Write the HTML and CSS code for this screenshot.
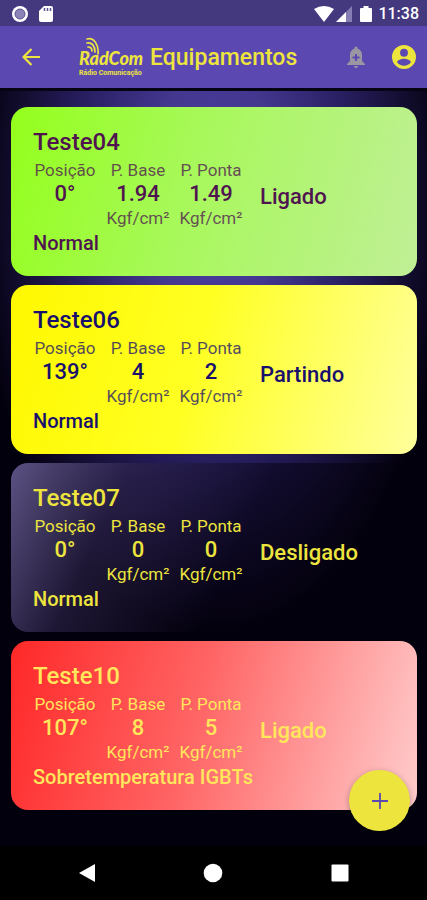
FILE: index.html
```html
<!DOCTYPE html>
<html lang="pt-BR">
<head>
    <meta charset="UTF-8">
    <meta name="viewport" content="width=device-width, initial-scale=1.0">
    <title>Equipamentos</title>
    <link rel="stylesheet" href="styles.css">
</head>
<body>
    <!-- Barra de status -->
    <div class="status-bar">
        <div class="status-left">
            <svg width="18" height="18" viewBox="0 0 18 18">
                <circle cx="9" cy="9" r="8" fill="#fff"/>
                <circle cx="9" cy="9" r="5" fill="#8c84b8" stroke="#5a5090"/>
            </svg>
            <svg width="14" height="18" viewBox="0 0 14 18">
                <path d="M5 1h7a2 2 0 0 1 2 2v12a2 2 0 0 1-2 2H2a2 2 0 0 1-2-2V6z" fill="#fff"/>
                <path d="M5.500 3v3M8.500 3v3M11.500 3v3" stroke="#5a5090" stroke-width="1.500"/>
            </svg>
        </div>
        <div class="status-right">
            <svg width="20" height="18" viewBox="0 0 20 18">
                <path d="M0 4Q10-2 20 4L10 17z" fill="#fff"/>
            </svg>
            <svg class="signal" width="16" height="18" viewBox="0 0 16 18">
                <path d="M0 17L16 1v16z" fill="#857db4"/>
                <path d="M0 17L10 7v10z" fill="#fff"/>
            </svg>
            <svg class="battery" width="12" height="18" viewBox="0 0 12 18">
                <path d="M3.500 1h5v2H11a1 1 0 0 1 1 1v12a1 1 0 0 1-1 1H1a1 1 0 0 1-1-1V4a1 1 0 0 1 1-1h2.500z" fill="#fff"/>
            </svg>
            <span>11:38</span>
        </div>
    </div>

    <!-- Cabeçalho -->
    <header class="app-bar">
        <button class="icon-btn" aria-label="Voltar">
            <svg width="18" height="18" viewBox="0 0 18 18">
                <path d="M18 9H2M9.500 1L1.500 9l8 8" fill="none" stroke="currentColor" stroke-width="2.200"/>
            </svg>
        </button>
        <div class="logo">
            <svg class="logo-waves" width="16" height="20" viewBox="0 0 16 20">
                <path d="M1 2C8 0 13 8 12 17M1 6c5-1 8 3 8 9M2 10c3 0 4 2 4 4" fill="none" stroke="currentColor" stroke-width="1.700" stroke-linecap="round"/>
            </svg>
            <span class="logo-name">RadCom</span>
            <span class="logo-sub">Rádio Comunicação</span>
        </div>
        <h1>Equipamentos</h1>
        <button class="icon-btn muted" aria-label="Adicionar alerta">
            <svg width="18" height="22" viewBox="0 0 18 22">
                <path fill-rule="evenodd" d="M7.500 2.500V2a1.500 1.500 0 0 1 3 0v.5C13.500 3.300 15 6 15 9v6l3 3v1H0v-1l3-3V9c0-3 1.500-5.700 4.500-6.500zM8 8v2.500H5.500v2H8V15h2v-2.500h2.500v-2H10V8z" fill="currentColor"/>
                <path d="M7 20h4a2 2 0 0 1-4 0z" fill="currentColor"/>
            </svg>
        </button>
        <button class="icon-btn" aria-label="Perfil">
            <svg width="24" height="24" viewBox="1 1 22 22">
                <path fill="currentColor" d="M12 1a11 11 0 1 0 0 22 11 11 0 0 0 0-22zm0 3.500a3.600 3.600 0 1 1 0 7.200 3.600 3.600 0 0 1 0-7.200zm0 15.500c-2.700 0-5-1.300-6.300-3.200 0-2 4.200-3.200 6.300-3.200s6.300 1.200 6.300 3.200C17 18.700 14.700 20 12 20z"/>
            </svg>
        </button>
    </header>

    <!-- Lista de equipamentos -->
    <main>
        <article class="card on">
            <h2>Teste04</h2>
            <div class="readings">
                <div class="reading"><span>Posição</span><strong>0°</strong></div>
                <div class="reading"><span>P. Base</span><strong>1.94</strong><span>Kgf/cm²</span></div>
                <div class="reading"><span>P. Ponta</span><strong>1.49</strong><span>Kgf/cm²</span></div>
                <div class="state">Ligado</div>
            </div>
            <p>Normal</p>
        </article>

        <article class="card starting">
            <h2>Teste06</h2>
            <div class="readings">
                <div class="reading"><span>Posição</span><strong>139°</strong></div>
                <div class="reading"><span>P. Base</span><strong>4</strong><span>Kgf/cm²</span></div>
                <div class="reading"><span>P. Ponta</span><strong>2</strong><span>Kgf/cm²</span></div>
                <div class="state">Partindo</div>
            </div>
            <p>Normal</p>
        </article>

        <article class="card off">
            <h2>Teste07</h2>
            <div class="readings">
                <div class="reading"><span>Posição</span><strong>0°</strong></div>
                <div class="reading"><span>P. Base</span><strong>0</strong><span>Kgf/cm²</span></div>
                <div class="reading"><span>P. Ponta</span><strong>0</strong><span>Kgf/cm²</span></div>
                <div class="state">Desligado</div>
            </div>
            <p>Normal</p>
        </article>

        <article class="card fault">
            <h2>Teste10</h2>
            <div class="readings">
                <div class="reading"><span>Posição</span><strong>107°</strong></div>
                <div class="reading"><span>P. Base</span><strong>8</strong><span>Kgf/cm²</span></div>
                <div class="reading"><span>P. Ponta</span><strong>5</strong><span>Kgf/cm²</span></div>
                <div class="state">Ligado</div>
            </div>
            <p>Sobretemperatura IGBTs</p>
        </article>

        <button class="fab" aria-label="Adicionar equipamento">
            <svg width="16" height="16" viewBox="0 0 16 16">
                <path d="M8 0v16M0 8h16" stroke="currentColor" stroke-width="1.800"/>
            </svg>
        </button>
    </main>

    <!-- Navegação do sistema -->
    <nav class="nav-bar">
        <button aria-label="Voltar">
            <svg width="20" height="20" viewBox="0 0 20 20"><path d="M18 1v18L2 10z" fill="#fff"/></svg>
        </button>
        <button aria-label="Início">
            <svg width="20" height="20" viewBox="0 0 20 20"><circle cx="10" cy="10" r="9.300" fill="#fff"/></svg>
        </button>
        <button aria-label="Recentes">
            <svg width="20" height="20" viewBox="0 0 20 20"><rect x="1.500" y="1.500" width="17" height="17" rx="1" fill="#fff"/></svg>
        </button>
    </nav>
</body>
</html>
```
FILE: styles.css
```css
* {
    box-sizing: border-box;
}

body {
    font-family: Roboto, sans-serif;
    margin: 0;
    min-height: 100vh;
    display: flex;
    flex-direction: column;
    background: #000;
    color: #ede53e;
}

button {
    padding: 0;
    border: none;
    background: none;
    color: inherit;
    cursor: pointer;
}

svg {
    display: block;
}

.status-bar {
    display: flex;
    justify-content: space-between;
    align-items: center;
    height: 26px;
    padding: 2px 8px 0 11px;
    background: #44387f;
    color: #fff;
    font-size: 16px;
    font-weight: 500;
}

.status-left,
.status-right {
    display: flex;
    align-items: center;
}

.status-left {
    gap: 10px;
}

.status-right {
    line-height: 24px;
}

.signal {
    margin-left: 2px;
}

.battery {
    margin: 0 6px 0 8px;
}

.app-bar {
    display: flex;
    align-items: center;
    height: 62px;
    padding: 0 11px 0 19px;
    background: #5b48b0;
}

.icon-btn {
    display: flex;
    justify-content: center;
    align-items: center;
    width: 24px;
    height: 48px;
}

.muted {
    color: #9a97a3;
    margin-right: 24px;
}

.logo {
    position: relative;
    display: flex;
    flex-direction: column;
    width: 66px;
    margin-left: 36px;
    padding-top: 10px;
    white-space: nowrap;
}

.logo-waves {
    position: absolute;
    left: 7px;
    top: 0;
}

.logo-name {
    font-family: Lato, sans-serif;
    font-size: 18px;
    font-weight: 900;
    font-style: italic;
    line-height: 22px;
}

.logo-sub {
    font-size: 7px;
    font-weight: 700;
    line-height: 8px;
}

h1 {
    flex: 1;
    margin: 0 0 0 5px;
    font-size: 23px;
    font-weight: 500;
}

main {
    position: relative;
    flex: 1;
    display: flex;
    flex-direction: column;
    gap: 9px;
    padding: 16px 10px 36px 11px;
    border-top: 3px solid #060312;
    background: radial-gradient(ellipse 56% 58% at 50% 14%, #4f3fa8 0%, #43378f 28%, #281f62 58%, #160f35 80%, #03000d 100%);
}

.card {
    padding: 20px 22px;
    border-radius: 17px;
}

.card h2 {
    margin: 0;
    font-size: 24px;
    font-weight: 500;
    line-height: 31px;
}

.card p {
    margin: 0;
    font-size: 20px;
    font-weight: 500;
    line-height: 26px;
}

.readings {
    display: flex;
    gap: 9px;
}

.reading {
    display: flex;
    flex-direction: column;
    align-items: center;
    min-width: 64px;
    font-size: 17px;
    line-height: 24px;
}

.reading strong {
    font-size: 22px;
    font-weight: 500;
}

.state {
    align-self: center;
    margin-left: 8px;
    padding-top: 5px;
    font-size: 22px;
    font-weight: 500;
}

.on {
    background: linear-gradient(105deg, #94ff1c, #a8f85c 45%, #c0ef96);
    color: #4f1450;
}

.starting {
    background: linear-gradient(105deg, #fff800, #ffff22 45%, #ffff9c);
    color: #18106c;
}

.on .reading span,
.starting .reading span {
    opacity: 0.75;
}

.off {
    background: linear-gradient(115deg, #5c5284, rgba(48, 38, 78, 0.6) 25%, rgba(3, 0, 13, 0.5) 55%, rgba(3, 0, 13, 0.5));
}

.fault {
    background: linear-gradient(105deg, #ff2828, #ff6464 45%, #ffcccc);
    color: #ffe65a;
}

.fab {
    position: absolute;
    right: 17px;
    bottom: 15px;
    display: flex;
    justify-content: center;
    align-items: center;
    width: 61px;
    height: 61px;
    border-radius: 50%;
    background: #ede53e;
    color: #5b48b0;
    box-shadow: 0 2px 6px rgba(0, 0, 0, 0.3);
}

.nav-bar {
    display: grid;
    grid-template-columns: repeat(3, 1fr);
    height: 54px;
    padding: 0 24px;
    background: #000;
}

.nav-bar button {
    display: flex;
    justify-content: center;
    align-items: center;
}
```
